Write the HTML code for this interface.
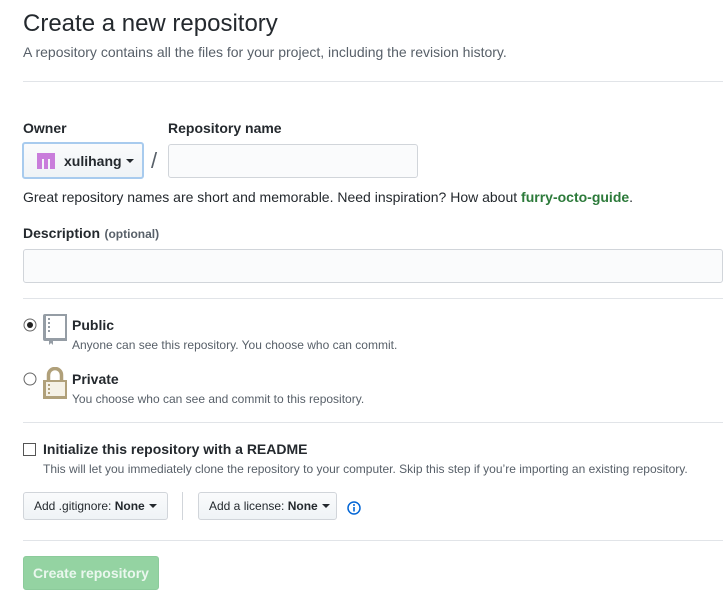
<!DOCTYPE html>
<html><head><meta charset="utf-8"><style>
body{margin:0;width:727px;height:599px;background:#fff;font-family:"Liberation Sans",Arial,sans-serif;color:#24292e;position:relative;overflow:hidden}
.a{position:absolute;white-space:nowrap}
.hr{position:absolute;left:23px;width:700px;height:1px;background:#e1e4e8}
.btn{position:absolute;border:1px solid #d1d5da;border-radius:3px;background:linear-gradient(#fafbfc,#eff3f6);box-sizing:border-box;font-size:12px;color:#24292e;display:flex;align-items:center;padding-left:10px}
.car{display:inline-block;width:0;height:0;border-left:4px solid transparent;border-right:4px solid transparent;border-top:4px solid #24292e;margin-left:4px;vertical-align:middle}
.inp{position:absolute;border:1px solid #d1d5da;border-radius:3px;background:#fafbfc;box-sizing:border-box}
.lbl{font-weight:bold;font-size:14px}
.sm{font-size:12px;color:#586069}
</style></head><body>
<div class="a" style="left:23px;top:10px;font-size:24px;font-weight:300">Create a new repository</div>
<div class="a" style="left:23px;top:44px;font-size:14px;color:#586069">A repository contains all the files for your project, including the revision history.</div>
<div class="hr" style="top:81px"></div>
<div class="a lbl" style="left:23px;top:120px">Owner</div>
<div class="a lbl" style="left:168px;top:120px">Repository name</div>
<div class="btn" style="left:22px;top:142px;width:122px;height:37px;border:2px solid #a8cbee;padding-left:13px;font-size:14px;font-weight:bold">
<svg width="18" height="16" viewBox="0 0 18 16" style="margin-right:9px;flex:none"><rect x="0" y="0" width="18" height="6" fill="#c97ddb"/><rect x="0" y="6" width="5" height="10" fill="#c97ddb"/><rect x="7" y="6" width="4" height="10" fill="#c97ddb"/><rect x="13" y="6" width="5" height="10" fill="#c97ddb"/></svg>xulihang<span class="car"></span></div>
<div class="a" style="left:151px;top:148px;font-size:22px;color:#586069">/</div>
<div class="inp" style="left:168px;top:144px;width:250px;height:34px"></div>
<div class="a" style="left:23px;top:189px;font-size:14px">Great repository names are short and memorable. Need inspiration? How about <b style="color:#2c7a3a">furry-octo-guide</b>.</div>
<div class="a" style="left:23px;top:225px"><span class="lbl">Description</span> <span style="font-size:12px;font-weight:bold;color:#586069">(optional)</span></div>
<div class="inp" style="left:23px;top:249px;width:700px;height:34px"></div>
<div class="hr" style="top:298px"></div>
<svg class="a" style="left:23px;top:318px" width="14" height="14"><circle cx="7" cy="7" r="6" fill="#fff" stroke="#666"/><circle cx="7" cy="7" r="3" fill="#222"/></svg>
<svg class="a" style="left:43px;top:314px" width="24" height="32" viewBox="0 0 24 32"><path d="M0 2Q0 0 2 0H24V27H10V31L8 29 6 31V27H2Q0 27 0 25Z" fill="#959da5"/><rect x="3" y="2" width="19" height="22" fill="#fff"/><g fill="#959da5"><rect x="5" y="4" width="2" height="2"/><rect x="5" y="8" width="2" height="2"/><rect x="5" y="12" width="2" height="2"/><rect x="5" y="16" width="2" height="2"/></g></svg>
<div class="a lbl" style="left:72px;top:317px">Public</div>
<div class="a sm" style="left:72px;top:338px">Anyone can see this repository. You choose who can commit.</div>
<svg class="a" style="left:23px;top:372px" width="14" height="14"><circle cx="7" cy="7" r="6" fill="#fff" stroke="#666"/></svg>
<svg class="a" style="left:43px;top:367px" width="24" height="32" viewBox="0 0 24 32"><path d="M5.5 14V8a6.5 6.5 0 0 1 13 0v6" fill="none" stroke="#b0a07a" stroke-width="3.5"/><rect x="0" y="13" width="24" height="19" fill="#b0a07a"/><rect x="3" y="15" width="19" height="14" fill="#f5f1e6"/><g fill="#b0a07a"><rect x="5" y="17" width="2" height="2"/><rect x="5" y="21" width="2" height="2"/><rect x="5" y="25" width="2" height="2"/></g></svg>
<div class="a lbl" style="left:72px;top:371px">Private</div>
<div class="a sm" style="left:72px;top:392px">You choose who can see and commit to this repository.</div>
<div class="hr" style="top:422px"></div>
<div class="a" style="left:23px;top:443px;width:11px;height:11px;border:1px solid #555;background:#fff"></div>
<div class="a lbl" style="left:43px;top:441px">Initialize this repository with a README</div>
<div class="a sm" style="left:43px;top:462px">This will let you immediately clone the repository to your computer. Skip this step if you’re importing an existing repository.</div>
<div class="btn" style="left:23px;top:492px;width:145px;height:28px">Add .gitignore:&nbsp;<b>None</b><span class="car"></span></div>
<div class="a" style="left:182px;top:492px;width:1px;height:28px;background:#d1d5da"></div>
<div class="btn" style="left:198px;top:492px;width:139px;height:28px">Add a license:&nbsp;<b>None</b><span class="car"></span></div>
<svg class="a" style="left:347px;top:501px" width="14" height="14"><circle cx="7" cy="7" r="6" fill="none" stroke="#0366d6" stroke-width="1.5"/><rect x="6.2" y="6" width="1.6" height="4.5" fill="#0366d6"/><circle cx="7" cy="4" r="1" fill="#0366d6"/></svg>
<div class="hr" style="top:540px"></div>
<div class="a" style="left:23px;top:556px;width:136px;height:34px;box-sizing:border-box;border:1px solid #8ccb9b;border-radius:3px;background:#94d3a2;color:#eaf7ee;font-weight:bold;font-size:14px;display:flex;align-items:center;justify-content:center">Create repository</div>
</body></html>
